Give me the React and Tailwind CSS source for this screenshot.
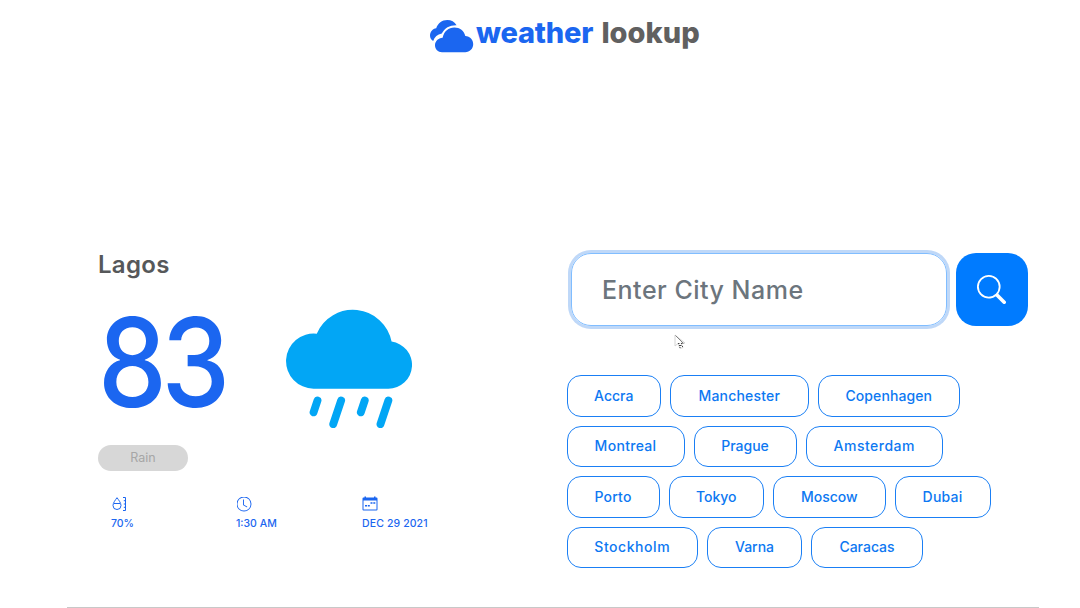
import { BsCloudRainFill, BsSearch, BsClock } from "react-icons/bs";

const rows = [
  [
    { name: "Accra", cls: "w-[94.5px] tracking-[0px]" },
    { name: "Manchester", cls: "w-[138.5px] tracking-[0.2px]" },
    { name: "Copenhagen", cls: "w-[142.5px] tracking-[0.1px]" },
  ],
  [
    { name: "Montreal", cls: "w-[118px] tracking-[0.3px]" },
    { name: "Prague", cls: "w-[103px] tracking-[0px]" },
    { name: "Amsterdam", cls: "w-[137.5px] tracking-[0.5px]" },
  ],
  [
    { name: "Porto", cls: "w-[93px] tracking-[0.2px]" },
    { name: "Tokyo", cls: "w-[95.5px] tracking-[0px]" },
    { name: "Moscow", cls: "w-[112.5px] tracking-[0px]" },
    { name: "Dubai", cls: "w-[96px] tracking-[0.2px]" },
  ],
  [
    { name: "Stockholm", cls: "w-[131.5px] tracking-[0.55px]" },
    { name: "Varna", cls: "w-[95px] tracking-[0px]" },
    { name: "Caracas", cls: "w-[112px] tracking-[0px]" },
  ],
];

function LogoClouds() {
  return (
    <svg className="mt-px h-[33px] w-[44px]" viewBox="0 0 44 33" fill="#1b66f0">
      <path d="M3.200 21C1.200 19.800 0 17.900 0 15.500c0-3.700 2.700-6.700 6.200-7.300C7.700 3.400 12 0 17.300 0c4 0 7.300 1.900 9.300 5.300-6.700-.2-12 2.700-14.800 8.300-4.400.9-7.300 3.500-8.600 7.400Z" />
      <path d="M12 32.200c-4 0-7-2.900-7-6.900 0-4.200 3.200-7.400 7.600-7.600C14.100 11.200 18.600 7.500 24.300 7.500c5.500 0 9.900 3.500 11 8.400 4.700.3 7.900 3.700 7.900 8.200 0 4.700-3.400 8.100-8 8.100Z" />
    </svg>
  );
}

function HumidityIcon() {
  return (
    <svg className="h-4 w-4" viewBox="0 0 16 16" fill="none" stroke="#1b66f0" strokeWidth="1">
      <path d="M6 1.700C4.500 3.800 2 6.800 2 9.500a4 4 0 0 0 8 0c0-2.700-2.500-5.700-4-7.800ZM3 7.500h6M12 1.500h2.500v13H12M12.800 4.700h1.700M12.800 8h1.700M12.800 11.300h1.700" />
    </svg>
  );
}

function CalendarIcon() {
  return (
    <svg className="h-4 w-4" viewBox="0 0 16 16" fill="#1b66f0">
      <path fillRule="evenodd" d="M1.500 1.500h1V.5h1.500v1h8V.5h1.500v1h1a1 1 0 0 1 1 1v11a1 1 0 0 1-1 1h-13a1 1 0 0 1-1-1v-11a1 1 0 0 1 1-1ZM1.500 4.500v9h13v-9Z" />
      <path d="M3 9h2v1.500H3ZM5.800 9h2v1.500h-2ZM8.500 6.300h2v1.500h-2ZM11.300 6.300h2v1.500h-2Z" />
    </svg>
  );
}

function Pointer() {
  return (
    <svg className="absolute top-[83px] left-[107px] h-[18px] w-[13px]" viewBox="0 0 13 18">
      <path d="M1 1v11l3-2.500 2 5 3-1-2-4.500h4Z" fill="#fff" stroke="#d4d4d4" strokeWidth="1" />
      <path d="m1.500 1.500 8 8" stroke="#777" strokeWidth=".9" />
      <path d="M4 9.500h1.500M7 9.500h1.500M5 11.500h2.500M5.500 13.500h1M8 12.500h1" stroke="#444" strokeWidth="1" />
    </svg>
  );
}

export default function App() {
  return (
    <div className="h-[608px] w-[1080px] overflow-hidden bg-white font-['Inter','Liberation_Sans',sans-serif]">
      <header className="flex h-[72px] items-start pt-[19px] pl-[430px]">
        <LogoClouds />
        <h1 className="ml-[2px] text-[29px] leading-7 font-extrabold tracking-[-0.2px] whitespace-nowrap text-[#1b66f0]">
          weather <span className="ml-[2px] tracking-[0px] text-[#606060]">lookup</span>
        </h1>
      </header>
      <main className="ml-[67px] flex h-[536px] w-[972px] border-b border-[#c8c8c8] pt-[179px]">
        <section className="w-[499.5px] pl-[31px]">
          <h2 className="h-[58px] text-[24px] leading-[28px] font-semibold tracking-[0.3px] text-[#56585a]">Lagos</h2>
          <div className="flex h-[136px] items-start">
            <div className="w-[188px] origin-left scale-x-[0.89] text-[123px] leading-[107px] font-medium tracking-[-6px] text-[#1b66f0]">83</div>
            <BsCloudRainFill className="-mt-[7px] h-[126px] w-[126px] text-[#02a6f5]" />
          </div>
          <div className="flex h-[26px] w-[90px] items-center justify-center rounded-full bg-[#d7d7d7] text-[12.5px] text-[#a6a6a6]">Rain</div>
          <div className="mt-[25px] flex pl-[13px] text-[10.5px] leading-3 font-medium text-[#1b66f0]">
            <div className="w-[125px]"><HumidityIcon /><p className="mt-[6px] tracking-[-0.1px]">70%</p></div>
            <div className="w-[126px]"><BsClock className="h-4 w-4 p-[0.5px]" /><p className="mt-[6px]">1:30 AM</p></div>
            <div><CalendarIcon /><p className="mt-[6px] tracking-[0.12px]">DEC 29 2021</p></div>
          </div>
        </section>
        <section className="flex w-[472px] flex-col">
          <div className="relative flex h-[124px] pt-[2px]">
            <div className="ml-[4.5px] flex h-[72.5px] w-[376px] items-center rounded-[20px] border border-[#80bdff] pt-[2px] pl-[30px] text-[25px] font-medium tracking-[0.5px] text-[#6c757d] ring-3 ring-[#bfd8f8]">Enter City Name</div>
            <button className="ml-[9px] flex h-[72.5px] w-[72px] items-center justify-center rounded-[20px] bg-[#007bff] pr-[2px]">
              <BsSearch className="h-[29px] w-[29px] text-white" />
            </button>
            <Pointer />
          </div>
          <div className="flex flex-col gap-[9px]">
            {rows.map((row, i) => (
              <div key={i} className="flex gap-[9px]">
                {row.map((c) => (
                  <button key={c.name} className={"h-[41.5px] shrink-0 rounded-[14px] border border-[#1a7ff5] pb-[1px] text-[14px] font-medium text-[#0d78f2] " + c.cls}>{c.name}</button>
                ))}
              </div>
            ))}
          </div>
        </section>
      </main>
    </div>
  );
}
